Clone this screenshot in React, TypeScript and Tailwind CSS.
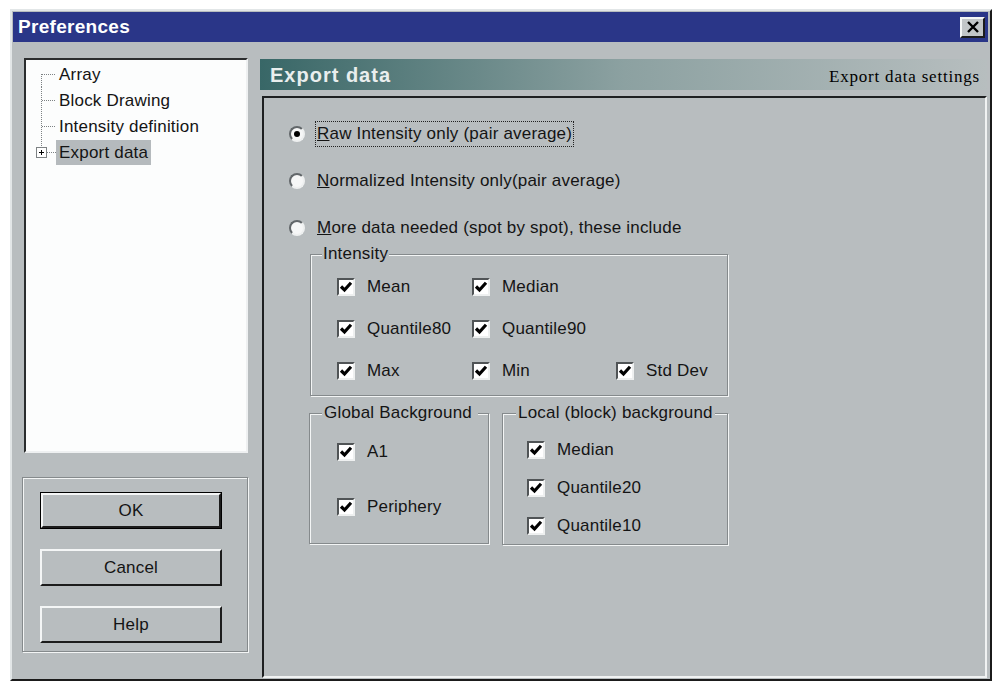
import React from "react";

const treeItems = ["Array", "Block Drawing", "Intensity definition", "Export data"];

// Dotted tree connector for one row; the last row carries the expand box
function TreeLines({ index, last }: { index: number; last: boolean }) {
  const top = index === 0 ? 13 : 0;
  return (
    <svg width="27" height="26" viewBox="0 0 27 26" className="shrink-0">
      {last ? (
        <>
          <line x1="12.5" y1="0" x2="12.5" y2="8" stroke="#7d8284" strokeDasharray="1 1" />
          <rect x="7.5" y="8.5" width="10" height="10" fill="#fff" stroke="#7d8284" />
          <line x1="10" y1="13.5" x2="15" y2="13.5" stroke="#000" />
          <line x1="12.5" y1="11" x2="12.5" y2="16" stroke="#000" />
          <line x1="18" y1="13.5" x2="27" y2="13.5" stroke="#7d8284" strokeDasharray="1 1" />
        </>
      ) : (
        <>
          <line x1="12.5" y1={top} x2="12.5" y2="26" stroke="#7d8284" strokeDasharray="1 1" />
          <line x1="13" y1="13.5" x2="27" y2="13.5" stroke="#7d8284" strokeDasharray="1 1" />
        </>
      )}
    </svg>
  );
}

function CheckBox({ label, className = "" }: { label: string; className?: string }) {
  return (
    <div className={`flex items-center h-[36px] ${className}`}>
      <span className="w-[18px] h-[18px] bg-white border-2 border-t-[#505456] border-l-[#505456] border-r-[#eef0f0] border-b-[#eef0f0] flex items-center justify-center shrink-0">
        <svg viewBox="0 0 14 14" className="w-[14px] h-[14px]">
          <polyline points="2,6.5 5.5,10 12,2.8" fill="none" stroke="#000" strokeWidth="3.2" />
        </svg>
      </span>
      <span className="ml-[12px]">{label}</span>
    </div>
  );
}

function Radio({
  checked = false,
  focused = false,
  children,
}: {
  checked?: boolean;
  focused?: boolean;
  children: React.ReactNode;
}) {
  return (
    <div className="flex items-center h-[47px]">
      <span className="w-4 h-4 rounded-full bg-[#f6f7f7] border-2 border-t-[#62676a] border-l-[#62676a] border-r-[#eef0f0] border-b-[#eef0f0] flex items-center justify-center shrink-0">
        {checked && <span className="w-[6px] h-[6px] rounded-full bg-black" />}
      </span>
      <span
        className={`ml-[10px] px-[1px] leading-[24px] border border-dotted ${
          focused ? "border-[#222]" : "border-transparent"
        }`}
      >
        {children}
      </span>
    </div>
  );
}

function GroupBox({
  title,
  titleClass,
  className,
  children,
}: {
  title: string;
  titleClass: string;
  className: string;
  children: React.ReactNode;
}) {
  return (
    <div
      className={`relative border border-[#858a8c] shadow-[inset_1px_1px_0_#f3f5f5,1px_1px_0_#f3f5f5] ${className}`}
    >
      <span className={`absolute -top-[11px] leading-[20px] bg-[#b8bdbf] ${titleClass}`}>{title}</span>
      {children}
    </div>
  );
}

function DialogButton({ label, isDefault = false }: { label: string; isDefault?: boolean }) {
  if (isDefault) {
    return (
      <div className="h-[37px] w-[182px] border border-black">
        <div className="h-full w-full border-2 border-t-[#f4f6f6] border-l-[#f4f6f6] border-r-[#1c1c1c] border-b-[#1c1c1c] flex items-center justify-center">
          {label}
        </div>
      </div>
    );
  }
  return (
    <div className="h-[37px] w-[182px] border-2 border-t-[#f4f6f6] border-l-[#f4f6f6] border-r-[#1c1c1c] border-b-[#1c1c1c] flex items-center justify-center">
      {label}
    </div>
  );
}

export default function App() {
  return (
    <div className="min-h-screen bg-white pt-[9px] pl-[10px] font-['Liberation_Sans',Arial,sans-serif] text-[17px] tracking-[0.2px] text-[#141414]">
      <div className="w-[982px] h-[672px] bg-[#b8bdbf] border-2 border-t-[#e2e6e7] border-l-[#e2e6e7] border-r-[#1b1b1b] border-b-[#1b1b1b] p-[1px] flex flex-col">
        {/* Title bar */}
        <div className="h-[30px] w-[975px] bg-[#2a3688] flex items-center justify-between pl-[5px] pr-[3px]">
          <span className="text-white font-bold text-[19px] tracking-[0.3px]">Preferences</span>
          <div className="w-[25px] h-[21px] bg-[#c2c6c8] border-2 border-t-[#f4f6f6] border-l-[#f4f6f6] border-r-[#1c1c1c] border-b-[#1c1c1c] flex items-center justify-center">
            <svg viewBox="0 0 14 12" className="w-[14px] h-[12px]">
              <path d="M2 1 L12 11 M12 1 L2 11" stroke="#000" strokeWidth="2.4" />
            </svg>
          </div>
        </div>

        <div className="flex flex-1">
          {/* Left column: tree + buttons */}
          <div className="ml-[9px] w-[226px] flex flex-col">
            <div className="mt-[16px] ml-[2px] w-[224px] h-[395px] bg-[#fcfdfd] border-2 border-t-[#2b2d2e] border-l-[#2b2d2e] border-r-[#eef0f1] border-b-[#eef0f1] pt-[1px] pl-[3px]">
              {treeItems.map((item, i) => {
                const last = i === treeItems.length - 1;
                return (
                  <div key={item} className="flex items-center h-[26px]">
                    <TreeLines index={i} last={last} />
                    <span className={`px-[3px] leading-[25px] ${last ? "bg-[#b5babd]" : ""}`}>{item}</span>
                  </div>
                );
              })}
            </div>

            <div className="mt-[24px] h-[175px] w-[226px] border border-[#858a8c] shadow-[inset_1px_1px_0_#f3f5f5,1px_1px_0_#f3f5f5] pt-[14px] pl-[17px] flex flex-col gap-[20px]">
              <DialogButton label="OK" isDefault />
              <DialogButton label="Cancel" />
              <DialogButton label="Help" />
            </div>
          </div>

          {/* Right column: page header + settings */}
          <div className="ml-[12px] flex flex-col">
            <div className="mt-[17px] w-[727px] h-[31px] bg-linear-to-r from-[#386767] via-[#8ca1a1] to-[#b7bebf] flex items-center justify-between pl-[10px] pr-[7px]">
              <span className="text-[#e9eeee] font-bold text-[20px] tracking-[1px]">Export data</span>
              <span className="font-['Liberation_Serif','Times_New_Roman',serif] text-[17px] tracking-[0.8px] text-black pt-[4px]">
                Export data settings
              </span>
            </div>

            <div className="mt-[6px] ml-[2px] w-[725px] h-[582px] border-2 border-t-[#1e2021] border-l-[#1e2021] border-r-[#f0f2f2] border-b-[#f0f2f2] pt-[12px] pl-[25px]">
              <Radio checked focused>
                <u>R</u>aw Intensity only (pair average)
              </Radio>
              <Radio>
                <u>N</u>ormalized Intensity only(pair average)
              </Radio>
              <Radio>
                <u>M</u>ore data needed (spot by spot), these include
              </Radio>

              <GroupBox title="Intensity" titleClass="left-[11px] px-[1px]" className="mt-[3px] ml-[21px] w-[418px] h-[142px] pt-[11px] pl-[26px]">
                <div className="grid grid-cols-[135px_144px_auto] auto-rows-[42px] items-center">
                  <CheckBox label="Mean" />
                  <CheckBox label="Median" />
                  <span />
                  <CheckBox label="Quantile80" />
                  <CheckBox label="Quantile90" />
                  <span />
                  <CheckBox label="Max" />
                  <CheckBox label="Min" />
                  <CheckBox label="Std Dev" />
                </div>
              </GroupBox>

              <div className="flex mt-[17px] ml-[20px] gap-[13px]">
                <GroupBox title="Global Background" titleClass="left-[12px] px-[2px] pr-[6px]" className="w-[180px] h-[131px] pt-[20px] pl-[27px] flex flex-col gap-[19px]">
                  <CheckBox label="A1" />
                  <CheckBox label="Periphery" />
                </GroupBox>
                <GroupBox title="Local (block) background" titleClass="left-[13px] px-[2px]" className="w-[226px] h-[132px] pt-[18px] pl-[24px] flex flex-col gap-[2px]">
                  <CheckBox label="Median" />
                  <CheckBox label="Quantile20" />
                  <CheckBox label="Quantile10" />
                </GroupBox>
              </div>
            </div>
          </div>
        </div>
      </div>
    </div>
  );
}
